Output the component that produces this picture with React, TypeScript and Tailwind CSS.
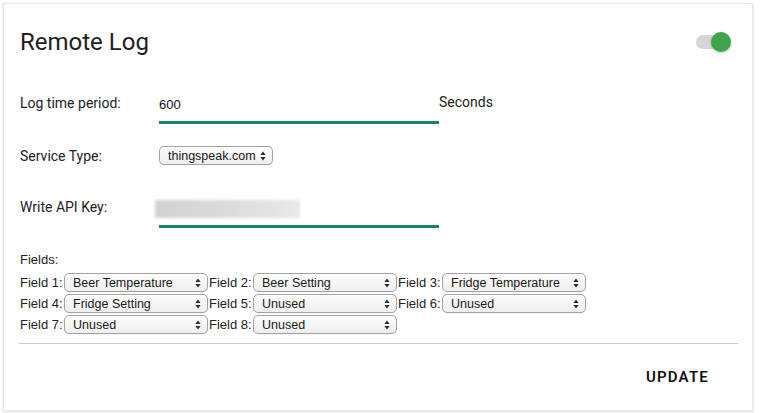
import React from "react";

const Arrows = () => (
  <svg width="6" height="10" viewBox="0 0 6 10" className="shrink-0">
    <path d="M3 0.5 L5.6 4 L0.4 4 Z" fill="#2b2b2b" />
    <path d="M3 9.5 L5.6 6 L0.4 6 Z" fill="#2b2b2b" />
  </svg>
);

const Select = ({ value, width }: { value: string; width: string }) => (
  <div
    className={`${width} h-[19px] flex items-center justify-between pl-[8px] pr-[6px] rounded-[5px] border border-[#a3a3a3] bg-gradient-to-b from-[#fdfdfd] to-[#eeeeee] text-[12.5px] leading-[16px] text-[#1a1a1a] shadow-[0_0.5px_0.5px_rgba(0,0,0,0.08)]`}
    style={{ fontFamily: '"Liberation Sans", Arial, sans-serif' }}
  >
    <span className="whitespace-nowrap overflow-hidden">{value}</span>
    <Arrows />
  </div>
);

const FieldCell = ({ n, value }: { n: number; value: string }) => (
  <div className="flex items-center">
    <span
      className="w-[44px] text-[13px] leading-[16px] text-[#222] whitespace-nowrap"
      style={{ fontFamily: '"Liberation Sans", Arial, sans-serif' }}
    >
      Field {n}:
    </span>
    <Select value={value} width="w-[144px]" />
  </div>
);

export default function App() {
  const fields: [number, string][] = [
    [1, "Beer Temperature"],
    [2, "Beer Setting"],
    [3, "Fridge Temperature"],
    [4, "Fridge Setting"],
    [5, "Unused"],
    [6, "Unused"],
    [7, "Unused"],
    [8, "Unused"],
  ];
  return (
    <div className="w-[761px] h-[413px] bg-white pt-[3px] pl-[3px]" style={{ fontFamily: "Roboto, sans-serif" }}>
      <div className="w-[750px] h-[408px] bg-white border border-[#e6e6e6] shadow-[0_1px_3px_rgba(0,0,0,0.14)] flex flex-col">
        {/* header */}
        <div className="mt-[24px] pl-[16px] pr-[21px] h-[28px] flex items-center justify-between">
          <h1 className="text-[24px] leading-[28px] text-[#212121] font-normal">Remote Log</h1>
          <div className="relative w-[35px] h-[20px] flex items-center">
            <div className="w-[30px] h-[14px] rounded-full bg-[#d6d6d6]" />
            <div className="absolute right-0 top-0 w-[20px] h-[20px] rounded-full bg-[#3ca548] shadow-[0_1px_3px_rgba(0,0,0,0.25)]" />
          </div>
        </div>

        {/* log time */}
        <div className="mt-[37px] pl-[16px] flex items-start">
          <div className="w-[139px] text-[14px] leading-[20px] text-[#222]">Log time period:</div>
          <div
            className="w-[280px] h-[31px] border-b-[3px] border-[#17826f] pt-[4px] text-[13px] leading-[16px] text-[#111]"
            style={{ fontFamily: '"Liberation Sans", Arial, sans-serif' }}
          >
            600
          </div>
          <div className="-mt-[1px] text-[14px] leading-[20px] text-[#222]">Seconds</div>
        </div>

        {/* service type */}
        <div className="mt-[22px] pl-[16px] flex items-center h-[19px]">
          <div className="w-[139px] text-[14px] leading-[20px] text-[#222]">Service Type:</div>
          <Select value="thingspeak.com" width="w-[114px]" />
        </div>

        {/* api key */}
        <div className="mt-[32px] pl-[16px] flex items-start">
          <div className="w-[139px] text-[14px] leading-[20px] text-[#222]">Write API Key:</div>
          <div className="w-[280px] h-[31px] border-b-[3px] border-[#17826f] pt-[3px]">
            <div className="-ml-[4px] w-[145px] h-[18px] bg-gradient-to-r from-[#d2d2d2] via-[#dbdbdb] to-[#e9e9e9] blur-[1.5px]" />
          </div>
        </div>

        {/* fields */}
        <div
          className="mt-[24px] pl-[16px] text-[13px] leading-[16px] text-[#222]"
          style={{ fontFamily: '"Liberation Sans", Arial, sans-serif' }}
        >
          Fields:
        </div>
        <div className="mt-[5px] pl-[16px] grid grid-cols-[188px_188px_188px] gap-x-[1px] gap-y-[2px] w-fit">
          {fields.map(([n, v]) => (
            <FieldCell key={n} n={n} value={v} />
          ))}
        </div>

        <div className="mt-[9px] ml-[15px] w-[719px] border-t border-[#cbcbcb]" />

        <div className="mt-[23px] flex justify-end pr-[43px]">
          <button className="text-[15px] leading-[20px] font-semibold tracking-[1.2px] text-[#111]">UPDATE</button>
        </div>
      </div>
    </div>
  );
}
